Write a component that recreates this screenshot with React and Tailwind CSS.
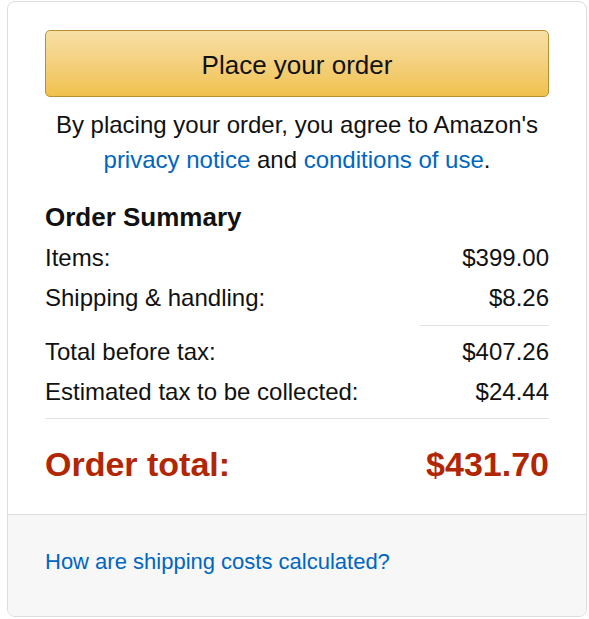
import React from 'react';

const Row = ({ label, value }) => (
    <div className="flex justify-between items-center h-[40px] leading-[40px]">
        <span>{label}</span>
        <span>{value}</span>
    </div>
);

export default function App() {
    return (
        <div className="bg-white w-[589px] h-[619px] pt-[1px] pl-[7px] text-[#111] font-['Liberation_Sans',Arial,sans-serif]">
            <div className="w-[580px] h-[616px] border border-[#dddddd] rounded-[8px] overflow-hidden flex flex-col">
                <div className="px-[37px] pt-[28px] text-[24px]">
                    <button className="w-full h-[67px] pt-[4px] rounded-[5px] border border-[#b7902f] bg-gradient-to-b from-[#f7dfa5] to-[#f0c14b] text-[26px] text-[#111]">
                        Place your order
                    </button>
                    <p className="mt-[10px] text-center leading-[35px]">
                        By placing your order, you agree to Amazon's{' '}
                        <a className="text-[#0066c0]">privacy notice</a> and{' '}
                        <a className="text-[#0066c0]">conditions of use</a>.
                    </p>
                    <h3 className="mt-[22px] text-[26px] font-bold leading-[36px]">Order Summary</h3>
                    <div className="mt-[3px]">
                        <Row label="Items:" value="$399.00" />
                        <Row label="Shipping & handling:" value="$8.26" />
                    </div>
                    <div className="flex justify-end mt-[7px]">
                        <div className="w-[129px] h-px bg-[#e3e3e3]" />
                    </div>
                    <div className="mt-[6px]">
                        <Row label="Total before tax:" value="$407.26" />
                        <Row label="Estimated tax to be collected:" value="$24.44" />
                    </div>
                    <div className="mt-[6px] h-px bg-[#e3e3e3]" />
                    <div className="mt-[25px] mb-[30px] flex justify-between items-center h-[40px] text-[34px] font-bold text-[#b12704]">
                        <span>Order total:</span>
                        <span>$431.70</span>
                    </div>
                </div>
                <div className="flex-1 border-t border-[#dddddd] bg-[#f7f7f7] px-[37px] pt-[30px] text-[22px]">
                    <a className="text-[#0066c0] leading-[30px]">How are shipping costs calculated?</a>
                </div>
            </div>
        </div>
    );
}
